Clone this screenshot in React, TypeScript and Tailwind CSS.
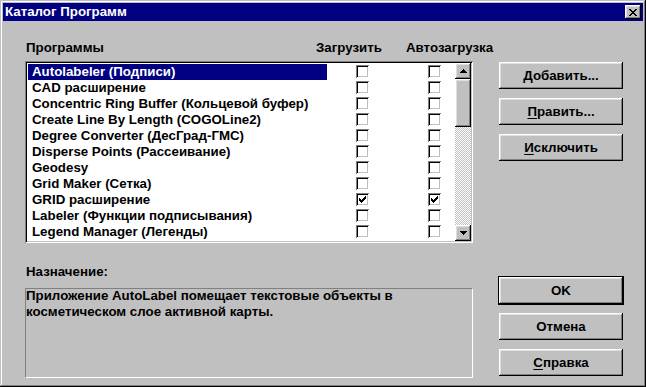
import React from "react";

const rows: { name: string; on?: boolean; sel?: boolean }[] = [
  { name: "Autolabeler (Подписи)", sel: true },
  { name: "CAD расширение" },
  { name: "Concentric Ring Buffer (Кольцевой буфер)" },
  { name: "Create Line By Length (COGOLine2)" },
  { name: "Degree Converter (ДесГрад-ГМС)" },
  { name: "Disperse Points (Рассеивание)" },
  { name: "Geodesy" },
  { name: "Grid Maker (Сетка)" },
  { name: "GRID расширение", on: true },
  { name: "Labeler (Функции подписывания)" },
  { name: "Legend Manager (Легенды)" },
];

const checkPixels = [
  "......#",
  ".....##",
  "#...###",
  "##.###.",
  "#####..",
  ".###...",
  "..#....",
];

function Check({ on }: { on?: boolean }) {
  return (
    <div className="w-[13px] h-[13px] mt-[1px] bg-white shadow-[inset_1px_1px_#808080,inset_-1px_-1px_#ffffff,inset_2px_2px_#000000,inset_-2px_-2px_#c0c0c0] flex items-center justify-center shrink-0">
      {on && (
        <svg width="7" height="7" viewBox="0 0 7 7" shapeRendering="crispEdges">
          {checkPixels.flatMap((r, y) =>
            r.split("").map((c, x) => (c === "#" ? <rect key={`${x}-${y}`} x={x} y={y} width="1" height="1" fill="#000" /> : null))
          )}
        </svg>
      )}
    </div>
  );
}

const raised =
  "bg-[#c0c0c0] shadow-[inset_-1px_-1px_#000000,inset_1px_1px_#ffffff,inset_-2px_-2px_#808080,inset_2px_2px_#dfdfdf]";

function Btn({ pre, rest, ul, dflt }: { pre?: string; ul?: string; rest: string; dflt?: boolean }) {
  const inner = (
    <div className={`w-[124px] h-[27px] ${raised} flex items-center justify-center leading-[16px]`}>
      <span>
        {ul && <span className="underline underline-offset-[2px]">{ul}</span>}
        {pre}
        {rest}
      </span>
    </div>
  );
  if (dflt)
    return <div className="border border-black -mx-[1px]">{inner}</div>;
  return inner;
}

function Arrow({ up }: { up?: boolean }) {
  return (
    <div className={`w-[16px] h-[16px] ${raised} flex items-center justify-center`}>
      <svg width="7" height="4" viewBox="0 0 7 4" shapeRendering="crispEdges">
        {up ? (
          <>
            <rect x="3" y="0" width="1" height="1" fill="#000" />
            <rect x="2" y="1" width="3" height="1" fill="#000" />
            <rect x="1" y="2" width="5" height="1" fill="#000" />
            <rect x="0" y="3" width="7" height="1" fill="#000" />
          </>
        ) : (
          <>
            <rect x="0" y="0" width="7" height="1" fill="#000" />
            <rect x="1" y="1" width="5" height="1" fill="#000" />
            <rect x="2" y="2" width="3" height="1" fill="#000" />
            <rect x="3" y="3" width="1" height="1" fill="#000" />
          </>
        )}
      </svg>
    </div>
  );
}

export default function App() {
  return (
    <div className="w-[646px] h-[387px] bg-[#c0c0c0] p-[3px] shadow-[inset_-1px_-1px_#000000,inset_1px_1px_#c0c0c0,inset_-2px_-2px_#808080,inset_2px_2px_#ffffff] font-['Liberation_Sans',Arial,sans-serif] font-bold text-[13.3px] text-black flex flex-col">
      {/* Title bar */}
      <div className="h-[18px] bg-[#000080] flex items-center justify-between pl-[2px] pr-[2px]">
        <span className="text-white leading-[16px]">Каталог Программ</span>
        <div className={`w-[16px] h-[14px] ${raised} flex items-center justify-center`}>
          <svg width="8" height="7" viewBox="0 0 8 7" shapeRendering="crispEdges">
            <path d="M0 0h2v1h-2zM6 0h2v1h-2zM1 1h2v1h-2zM5 1h2v1h-2zM2 2h4v1h-4zM3 3h2v1h-2zM2 4h4v1h-4zM1 5h2v1h-2zM5 5h2v1h-2zM0 6h2v1h-2zM6 6h2v1h-2z" fill="#000" />
          </svg>
        </div>
      </div>

      {/* Body */}
      <div className="flex flex-row pl-[22px]">
        {/* Left column */}
        <div className="w-[448px] shrink-0 flex flex-col">
          <div className="mt-[19px] flex leading-[16px] h-[16px] whitespace-nowrap">
            <span className="w-[291px] shrink-0 pl-[1px]">Программы</span>
            <span className="w-[90px] shrink-0">Загрузить</span>
            <span className="shrink-0">Автозагрузка</span>
          </div>

          <div className="mt-[5px] h-[182px] bg-white p-[2px] flex shadow-[inset_1px_1px_#808080,inset_-1px_-1px_#ffffff,inset_2px_2px_#000000,inset_-2px_-2px_#c0c0c0]">
            <div className="flex-1 pt-[1px] flex flex-col overflow-hidden">
              {rows.map((r) => (
                <div key={r.name} className="h-[16px] flex items-start">
                  <div
                    className={`ml-[1px] w-[299px] shrink-0 h-[16px] pl-[4px] leading-[16px] whitespace-nowrap ${
                      r.sel ? "bg-[#000080] text-white" : ""
                    }`}
                  >
                    {r.name}
                  </div>
                  <div className="ml-[29px] shrink-0">
                    <Check on={r.on} />
                  </div>
                  <div className="ml-[59px] shrink-0">
                    <Check on={r.on} />
                  </div>
                </div>
              ))}
            </div>
            <div className="w-[16px] shrink-0 h-full flex flex-col">
              <Arrow up />
              <div className={`w-[16px] h-[48px] ${raised}`} />
              <div className="flex-1 bg-[repeating-conic-gradient(#c0c0c0_0%_25%,#ffffff_0%_50%)] bg-[length:2px_2px]" />
              <Arrow />
            </div>
          </div>

          <div className="mt-[21px] leading-[16px] h-[16px] pl-[1px]">Назначение:</div>
          <div className="mt-[8px] h-[90px] border border-t-[#808080] border-l-[#808080] border-r-white border-b-white leading-[16px]">
            <div className="-mt-[1px]">
              Приложение AutoLabel помещает текстовые объекты в
              <br />
              косметическом слое активной карты.
            </div>
          </div>
        </div>

        {/* Right column */}
        <div className="ml-[26px] w-[124px] shrink-0 flex flex-col pt-[41px]">
          <div className="flex flex-col gap-[9px]">
            <Btn ul="Д" rest="обавить..." />
            <Btn ul="П" rest="равить..." />
            <Btn ul="И" rest="сключить" />
          </div>
          <div className="mt-[115px] flex flex-col gap-[8px]">
            <Btn rest="OK" dflt />
            <Btn rest="Отмена" />
            <div className="mt-[1px]">
              <Btn ul="С" rest="правка" />
            </div>
          </div>
        </div>
      </div>
    </div>
  );
}
